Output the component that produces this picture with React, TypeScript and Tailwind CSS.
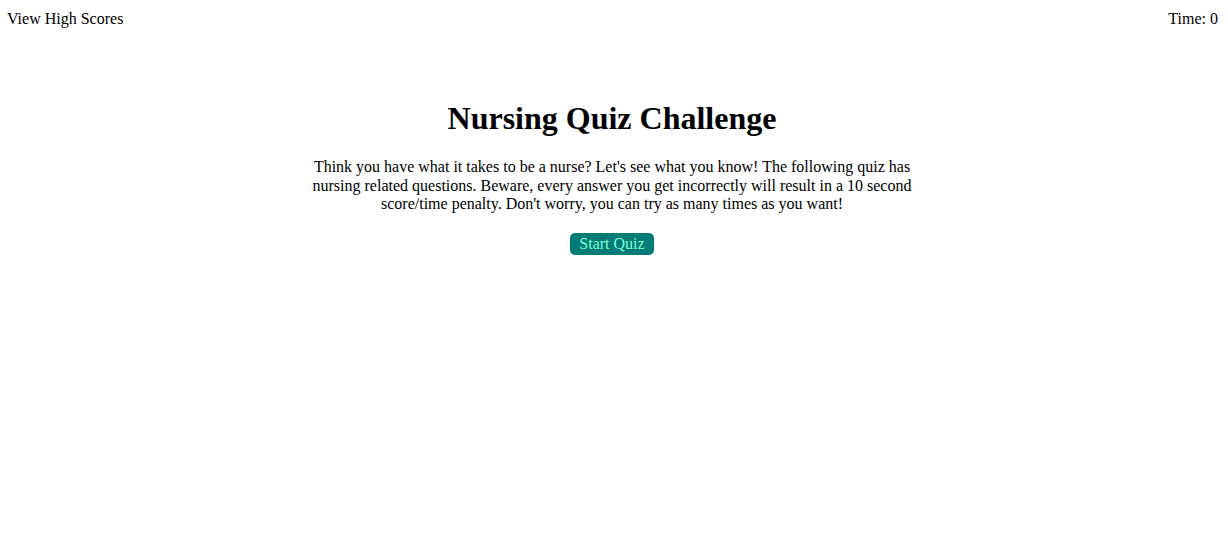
export default function App() {
  return (
    <div className="min-h-screen bg-white text-black font-['Liberation_Serif','Times_New_Roman',serif] text-base">
      {/* Header */}
      <header className="flex justify-between items-start pl-[7px] pr-[10px] pt-[7px]">
        <a className="cursor-pointer">View High Scores</a>
        <div>Time: 0</div>
      </header>

      {/* Intro */}
      <div className="pr-[4px]">
        <main className="mx-auto mt-[69px] w-[600px] text-center">
          <h1 className="text-[32px] font-bold leading-[37px]">Nursing Quiz Challenge</h1>
          <p className="mt-[21px] leading-[18.5px]">
            Think you have what it takes to be a nurse? Let's see what you know! The following quiz has
            nursing related questions. Beware, every answer you get incorrectly will result in a 10 second
            score/time penalty. Don't worry, you can try as many times as you want!
          </p>
          <button className="mt-[19px] rounded-[5px] bg-[#007b75] px-[9px] leading-[22px] text-[#7fffd4]">
            Start Quiz
          </button>
        </main>
      </div>
    </div>
  );
}
